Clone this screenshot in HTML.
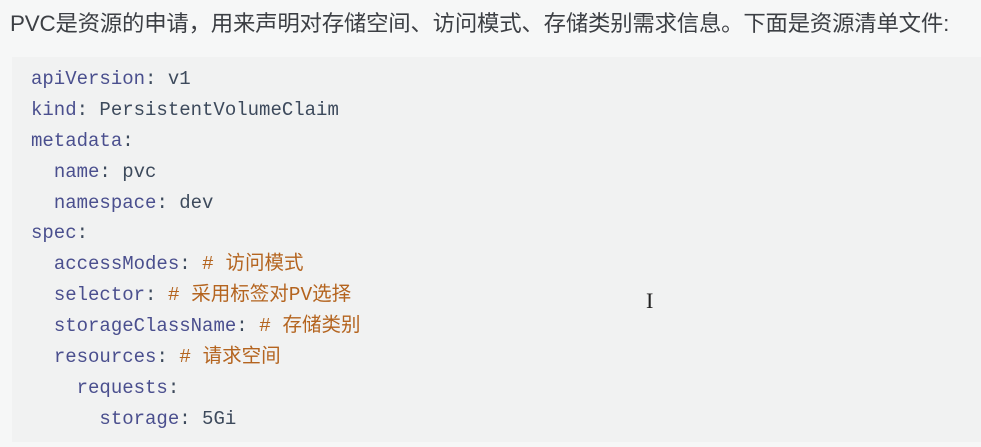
<!DOCTYPE html>
<html><head><meta charset="utf-8"><style>
body{margin:0;width:981px;height:447px;background:#f6f7f7;overflow:hidden;font-family:"Liberation Sans","Noto Sans CJK SC",sans-serif;}
.t{position:absolute;left:10px;top:6px;font-size:22.4px;color:#3c3f44;white-space:nowrap;letter-spacing:-0.2px}
.code{position:absolute;left:12px;top:57px;width:980px;height:385px;background:#f1f2f2;}
.l{position:absolute;left:31px;height:31px;line-height:31px;white-space:pre;font-family:"Liberation Mono","Noto Sans CJK SC",monospace;font-size:19px;color:#3d4a5c;}
.k{color:#4a4f8e}.c{color:#b4641f;font-size:19.5px}
</style></head><body>
<div class="t">PVC是资源的申请，用来声明对存储空间、访问模式、存储类别需求信息。下面是资源清单文件:</div>
<div class="code"></div>
<div class="l" style="top:64px"><span class="k">apiVersion</span>: v1</div>
<div class="l" style="top:95px"><span class="k">kind</span>: PersistentVolumeClaim</div>
<div class="l" style="top:126px"><span class="k">metadata</span>:</div>
<div class="l" style="top:157px">  <span class="k">name</span>: pvc</div>
<div class="l" style="top:188px">  <span class="k">namespace</span>: dev</div>
<div class="l" style="top:218px"><span class="k">spec</span>:</div>
<div class="l" style="top:249px">  <span class="k">accessModes</span>: <span class="c"># 访问模式</span></div>
<div class="l" style="top:280px">  <span class="k">selector</span>: <span class="c"># 采用标签对PV选择</span></div>
<div class="l" style="top:311px">  <span class="k">storageClassName</span>: <span class="c"># 存储类别</span></div>
<div class="l" style="top:342px">  <span class="k">resources</span>: <span class="c"># 请求空间</span></div>
<div class="l" style="top:373px">    <span class="k">requests</span>:</div>
<div class="l" style="top:404px">      <span class="k">storage</span>: 5Gi</div>
<div style="position:absolute;left:646px;top:288px;font-size:22px;color:#222;font-family:'Liberation Serif',serif">I</div>
</body></html>
